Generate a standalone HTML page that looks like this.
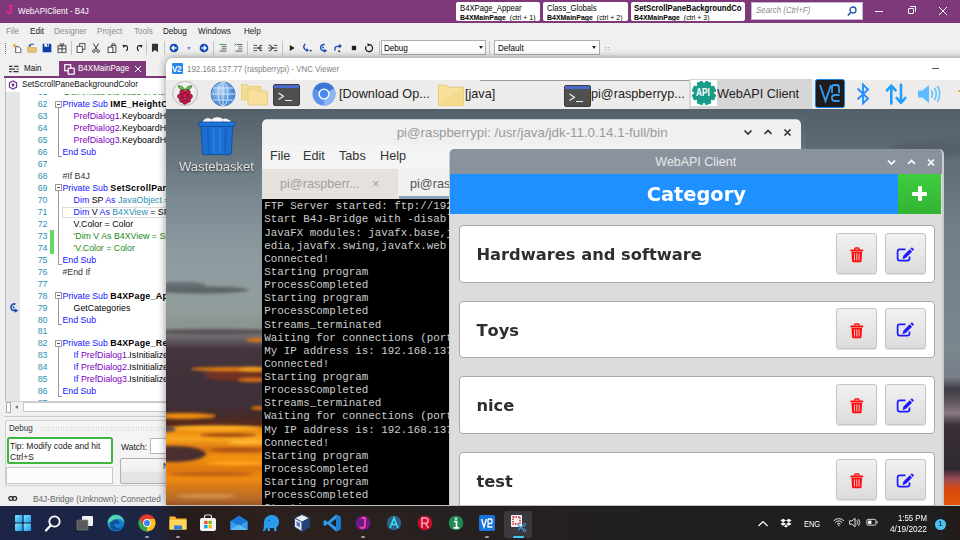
<!DOCTYPE html>
<html><head><meta charset="utf-8"><title>WebAPIClient - B4J</title>
<style>
*{box-sizing:border-box;margin:0;padding:0}
html,body{width:960px;height:540px;overflow:hidden;background:#f0f0f0;font-family:"Liberation Sans",sans-serif;}
.a{position:absolute}
.t{position:absolute;white-space:nowrap;line-height:1}
/* B4J IDE */
#ide{left:0;top:0;width:960px;height:505px;background:#f0f0f0;overflow:hidden}
#tb{left:0;top:0;width:960px;height:22.600px;background:#7e397b}
.qb{background:#fff;border-radius:2px;top:2px;height:19px;overflow:hidden}
.menu{top:27px;font-size:9px;color:#222;transform:scaleX(.9);transform-origin:0 0}
.menu.d{color:#8d8d8d}
.ln{left:25px;width:23px;text-align:right;font-size:8.8px;color:#2b91af;font-family:"Liberation Sans",sans-serif}
.cd{font-size:8.8px;color:#000}
.cd b{letter-spacing:.3px}
.sg{transform:scaleX(.89);transform-origin:0 0}
.k{color:#1414ff}.p{color:#8000c0}.ty{color:#2b91af}.g{color:#1a8a1a}.b{font-weight:bold}
#tools svg{transform:scale(.87)}
/* VNC */
#vnc{left:166px;top:58px;width:800px;height:447px;background:#fff;border-radius:7px 0 0 0;overflow:hidden;box-shadow:0 0 8px rgba(0,0,0,.45)}
#pibar{left:0;top:20px;width:800px;height:31px;background:#eeecea}
#desk{left:0;top:51px;width:800px;height:400px;overflow:hidden;background:#5a6770}
.pit{font-size:13.2px;color:#222;transform:scaleX(.96);transform-origin:0 0}
/* terminal */
#term{left:96px;top:9px;width:539px;height:400px;background:#f0f0f0;border-radius:5px 5px 0 0;overflow:hidden;clip-path:inset(1.3px 0 0 0 round 5px 5px 0 0)}
#tscr{left:0;top:80.700px;width:540px;height:320px;background:#000}
.tl{margin-top:-0.700px;left:2.300px;font-family:"Liberation Mono",monospace;font-size:10.83px;color:#cdcdcd}
.pim{font-size:13.2px;color:#333;transform:scaleX(.96);transform-origin:0 0}
/* webapi */
#wa{left:283px;top:40px;width:495px;height:360px;border-left:1.5px solid #c9cbcd;border-right:2px solid #c9cbcd;background:#dcdcdc;border-radius:5px 5px 0 0;overflow:hidden}
#wat{left:-2px;top:0;width:497px;height:24.5px;background:#8a939d}
#wah{left:0;top:24.5px;width:447.5px;height:40.5px;background:#1e90ff}
#wag{left:447.5px;top:24.5px;width:43.5px;height:40.5px;background:linear-gradient(#40cc40,#32b432)}
.it{left:9px;width:475.5px;height:57.5px;background:#fff;border:1px solid #a9a9a9;border-radius:4px}
.itx{font-kerning:none;left:16.4px;top:21px;font-family:"DejaVu Sans",sans-serif;font-weight:bold;font-size:16.3px;color:#2e2e2e}
.bt{top:6.5px;width:41px;height:41px;border:1px solid #c4c4c4;border-radius:3px;background:linear-gradient(#f1f1f1,#dcdcdc);box-shadow:0 1px 1px rgba(0,0,0,.12)}
/* taskbar */
#wtb{left:0;top:505.600px;width:960px;height:35px;background:linear-gradient(90deg,#1c2546 0,#1d2545 150px,#271c1c 185px,#2b201d 260px,#292120 380px,#252021 520px,#211f20 640px,#1f1f20 760px,#1f1f20 935px,#241b1a 960px)}
</style></head><body>
<div id="ide" class="a">
<div id="tb" class="a">
  <div class="t" style="left:5.5px;top:4px;font-size:12.5px;font-weight:bold;color:#ee1fa0;transform:scaleX(.85);transform-origin:0 0">J</div>
  <div class="t sg" style="left:18px;top:7px;font-size:9px;color:#fff;">WebAPIClient - B4J</div>
  <div class="a qb" style="left:455.700px;width:84.500px"><div class="t" style="left:4.300px;top:2px;font-size:9px;color:#000;transform:scaleX(.855);transform-origin:0 0">B4XPage_Appear</div><div class="t" style="left:4.300px;top:11.5px;font-size:7.4px;color:#000;transform:scaleX(.94);transform-origin:0 0"><b>B4XMainPage</b> &nbsp;(ctrl + 1)</div></div>
  <div class="a qb" style="left:543px;width:85px"><div class="t" style="left:4px;top:2px;font-size:9px;color:#000;transform:scaleX(.855);transform-origin:0 0">Class_Globals</div><div class="t" style="left:4px;top:11.5px;font-size:7.4px;color:#000;transform:scaleX(.94);transform-origin:0 0"><b>B4XMainPage</b> &nbsp;(ctrl + 2)</div></div>
  <div class="a qb" style="left:631px;width:114px"><div class="t" style="left:3px;top:2px;font-size:9px;color:#000;font-weight:bold;transform:scaleX(.86);transform-origin:0 0">SetScrollPaneBackgroundCo</div><div class="t" style="left:3px;top:11.5px;font-size:7.4px;color:#000;transform:scaleX(.94);transform-origin:0 0"><b>B4XMainPage</b> &nbsp;(ctrl + 3)</div></div>
  <div class="a" style="left:751px;top:2px;width:112px;height:18px;background:#fff;border:1px solid #c9b3d2"><div class="t" style="left:4px;top:3px;font-size:9px;font-style:italic;color:#8a8a8a;transform:scaleX(.88);transform-origin:0 0">Search (Ctrl+F)</div>
   <svg class="a" style="left:94px;top:2px" width="12" height="12" viewBox="0 0 12 12"><circle cx="7" cy="5" r="3" fill="none" stroke="#1a4fb0" stroke-width="1.3"/><path d="M4.8 7.2L1.8 10.4" stroke="#1a4fb0" stroke-width="1.5"/></svg></div>
  <div class="a" style="left:875px;top:11px;width:8px;height:1px;background:#fff"></div>
  <div class="a" style="left:908px;top:8px;width:6px;height:6px;border:1px solid #fff;border-radius:1px"></div>
  <div class="a" style="left:910px;top:6px;width:6px;height:6px;border-top:1px solid #fff;border-right:1px solid #fff;border-radius:1px"></div>
  <svg class="a" style="left:938px;top:6px" width="10" height="10" viewBox="0 0 10 10"><path d="M1 1L9 9M9 1L1 9" stroke="#fff" stroke-width="1"/></svg>
 </div>
 <div class="t menu d" style="left:6px">File</div>
 <div class="t menu" style="left:30px">Edit</div>
 <div class="t menu d" style="left:54px">Designer</div>
 <div class="t menu d" style="left:97px">Project</div>
 <div class="t menu d" style="left:134px">Tools</div>
 <div class="t menu" style="left:163px">Debug</div>
 <div class="t menu" style="left:198px">Windows</div>
 <div class="t menu" style="left:244px">Help</div>
 <!-- toolbar -->
 <div id="tools" class="a" style="left:0;top:39px;width:960px;height:19px">
  <div class="a" style="left:5px;top:4px;width:1px;height:11px;border-left:1px dotted #777"></div>
  <div class="a" style="left:71.4px;top:2px;width:1px;height:14px;background:#c4c4c4"></div>
  <div class="a" style="left:145.5px;top:2px;width:1px;height:14px;background:#c4c4c4"></div>
  <div class="a" style="left:164.1px;top:2px;width:1px;height:14px;background:#c4c4c4"></div>
  <div class="a" style="left:213.0px;top:2px;width:1px;height:14px;background:#c4c4c4"></div>
  <div class="a" style="left:247.2px;top:2px;width:1px;height:14px;background:#c4c4c4"></div>
  <div class="a" style="left:281.8px;top:2px;width:1px;height:14px;background:#c4c4c4"></div>
  <div class="a" style="left:378.5px;top:2px;width:1px;height:14px;background:#c4c4c4"></div>
  <div class="a" style="left:489.0px;top:2px;width:1px;height:14px;background:#c4c4c4"></div>
  <svg class="a" style="left:10.5px;top:2.9px" width="12" height="12" viewBox="0 0 12 12"><path d="M4.5 4.5H8L10.5 7V11.5H4.5Z" fill="#fff" stroke="#444" stroke-width="1"/><path d="M3 0.5L3.8 2.4L5.8 3L3.8 3.8L3 5.8L2.2 3.8L0.3 3L2.2 2.4Z" fill="#e8a317"/></svg>
  <svg class="a" style="left:25.7px;top:2.9px" width="12" height="12" viewBox="0 0 12 12"><path d="M1 4.5H5L6 5.5H11V11H1Z" fill="#e8c27a" stroke="#c89a45" stroke-width="0.6"/><path d="M3.5 3.5C4.5 1 7 1 8 2.2" fill="none" stroke="#1a4fb0" stroke-width="1.3"/><path d="M2 2.2L5 2.2L3.6 5Z" fill="#1a4fb0"/></svg>
  <svg class="a" style="left:40.9px;top:2.9px" width="12" height="12" viewBox="0 0 12 12"><path d="M1 1H10L11 2V11H1Z" fill="#0b3fa8"/><rect x="3" y="1" width="5" height="3.5" fill="#fff"/><rect x="6" y="1.5" width="1.3" height="2.3" fill="#0b3fa8"/></svg>
  <svg class="a" style="left:56.0px;top:2.9px" width="12" height="12" viewBox="0 0 12 12"><rect x="1.5" y="3.5" width="9" height="8" fill="none" stroke="#333" stroke-width="1"/><path d="M6 3.5V11.5M1.5 7H10.5" stroke="#333" stroke-width="1"/><path d="M6 3.5C4 3 3 1.2 4.2 0.8C5.2 0.6 6 2 6 3.5C6 2 6.8 0.6 7.8 0.8C9 1.2 8 3 6 3.5" fill="none" stroke="#333" stroke-width="0.9"/></svg>
  <svg class="a" style="left:75.0px;top:2.9px" width="12" height="12" viewBox="0 0 12 12"><rect x="4.5" y="1" width="6" height="6.5" fill="#fff" stroke="#333" stroke-width="1"/><rect x="1.5" y="4" width="6" height="7" fill="#fff" stroke="#333" stroke-width="1"/></svg>
  <svg class="a" style="left:90.0px;top:2.9px" width="12" height="12" viewBox="0 0 12 12"><path d="M3 0.8L7.5 8M9 0.8L4.5 8" stroke="#333" stroke-width="1.1" fill="none"/><circle cx="3.6" cy="9.6" r="1.6" fill="none" stroke="#333" stroke-width="1"/><circle cx="8.4" cy="9.6" r="1.6" fill="none" stroke="#333" stroke-width="1"/></svg>
  <svg class="a" style="left:105.5px;top:2.9px" width="12" height="12" viewBox="0 0 12 12"><rect x="1.5" y="5" width="5.5" height="6.3" fill="#fff" stroke="#333" stroke-width="1"/><path d="M5 5V3H10.5V11.3H7" fill="none" stroke="#333" stroke-width="1"/><rect x="6.2" y="1.2" width="3" height="2" fill="#fff" stroke="#333" stroke-width="0.9"/></svg>
  <svg class="a" style="left:119.6px;top:2.9px" width="12" height="12" viewBox="0 0 12 12"><path d="M3.5 4C7 2 9.5 5 6.5 9.5" fill="none" stroke="#222" stroke-width="1.3"/><path d="M2 2.2L5.6 2.8L3 6Z" fill="#222"/></svg>
  <svg class="a" style="left:132.5px;top:2.9px" width="12" height="12" viewBox="0 0 12 12"><path d="M8.5 4C5 2 2.5 5 5.5 9.5" fill="none" stroke="#222" stroke-width="1.3"/><path d="M10 2.2L6.4 2.8L9 6Z" fill="#222"/></svg>
  <svg class="a" style="left:149.0px;top:2.9px" width="12" height="12" viewBox="0 0 12 12"><path d="M2.5 1H9.5V11L6 8.2L2.5 11Z" fill="#333"/></svg>
  <svg class="a" style="left:168.0px;top:2.9px" width="12" height="12" viewBox="0 0 12 12"><circle cx="6" cy="6" r="5" fill="#0b4bb5"/><path d="M9 6H4M6.2 3.5L3.6 6L6.2 8.5" fill="none" stroke="#fff" stroke-width="1.5"/></svg>
  <div class="a" style="left:186.5px;top:8px;border:2.5px solid transparent;border-top:3px solid #6a8fd0"></div>
  <svg class="a" style="left:197.5px;top:2.9px" width="12" height="12" viewBox="0 0 12 12"><circle cx="6" cy="6" r="5" fill="#0b4bb5"/><path d="M3 6H8M5.8 3.5L8.4 6L5.8 8.5" fill="none" stroke="#fff" stroke-width="1.5"/></svg>
  <svg class="a" style="left:217.0px;top:2.9px" width="12" height="12" viewBox="0 0 12 12"><path d="M2 2H10" stroke="#2a8a2a" stroke-width="1"/><path d="M4.5 4.5H10M4.5 7H10M2 9.5H10" stroke="#444" stroke-width="1"/></svg>
  <svg class="a" style="left:232.5px;top:2.9px" width="12" height="12" viewBox="0 0 12 12"><path d="M4 2H10" stroke="#444" stroke-width="1"/><path d="M5 4.5H10M5 7H10" stroke="#2a8a2a" stroke-width="1"/><path d="M2 9.5H10" stroke="#444" stroke-width="1"/><path d="M1 3L3 1.2M1 1.2L3 3" stroke="#444" stroke-width="0.8"/></svg>
  <svg class="a" style="left:251.7px;top:2.9px" width="12" height="12" viewBox="0 0 12 12"><path d="M1 3H5M8 3H11M1 9H5M8 9H11M0.5 6H11" stroke="#333" stroke-width="1"/><path d="M9 3.8L6.4 6L9 8.2" fill="none" stroke="#333" stroke-width="1.2"/></svg>
  <svg class="a" style="left:266.7px;top:2.9px" width="12" height="12" viewBox="0 0 12 12"><path d="M1 3H4M7 3H11M1 9H4M7 9H11M0.5 6H11" stroke="#333" stroke-width="1"/><path d="M3.4 3.8L6 6L3.4 8.2" fill="none" stroke="#333" stroke-width="1.2"/></svg>
  <svg class="a" style="left:286.0px;top:2.9px" width="12" height="12" viewBox="0 0 12 12"><path d="M3.5 2.5L9 6L3.5 9.5Z" fill="#222"/></svg>
  <svg class="a" style="left:301.0px;top:2.9px" width="12" height="12" viewBox="0 0 12 12"><path d="M4 1.5C0.5 4.5 3 9 7 8.5" fill="none" stroke="#1a4fb0" stroke-width="1.6"/><path d="M5.5 6.2L8.6 8.6L5.2 10.6Z" fill="#1a4fb0"/><circle cx="10.3" cy="9" r="1.1" fill="#222"/></svg>
  <svg class="a" style="left:316.7px;top:2.9px" width="12" height="12" viewBox="0 0 12 12"><path d="M8 2.2A3.6 3.6 0 1 0 8 9" fill="none" stroke="#1a4fb0" stroke-width="1.6"/><path d="M6.8 7L11 9.2L7.2 11.5Z" fill="#1a4fb0"/><circle cx="6" cy="5.5" r="1.1" fill="#1a4fb0"/></svg>
  <svg class="a" style="left:332.0px;top:2.9px" width="12" height="12" viewBox="0 0 12 12"><path d="M2.5 9V6.5C2.5 4.5 4 3.8 8 3.8" fill="none" stroke="#1a4fb0" stroke-width="1.6"/><path d="M7 1L10.8 3.8L7 6.6Z" fill="#1a4fb0"/><circle cx="7.4" cy="9.8" r="1.1" fill="#222"/></svg>
  <svg class="a" style="left:347.5px;top:2.9px" width="12" height="12" viewBox="0 0 12 12"><rect x="3.5" y="3.5" width="5" height="5" fill="#222"/></svg>
  <svg class="a" style="left:362.7px;top:2.9px" width="12" height="12" viewBox="0 0 12 12"><path d="M6 2.2A4 4 0 1 1 2.6 4.2" fill="none" stroke="#222" stroke-width="1.5"/><path d="M4.2 0.2L7.4 2.2L4.4 4.5Z" fill="#222"/></svg>
  <div class="a" style="left:381px;top:1px;width:105px;height:15px;background:#fff;border:1px solid #adadad"><div class="t" style="left:2px;top:3px;font-size:9px;color:#000;transform:scaleX(.9);transform-origin:0 0">Debug</div><div class="a" style="left:97px;top:5px;border:2.5px solid transparent;border-top:3px solid #222"></div></div>
  <div class="a" style="left:494px;top:1px;width:106px;height:15px;background:#fff;border:1px solid #adadad"><div class="t" style="left:3px;top:3px;font-size:9px;color:#000;transform:scaleX(.9);transform-origin:0 0">Default</div><div class="a" style="left:97px;top:5px;border:2.5px solid transparent;border-top:3px solid #222"></div></div>
  <div class="t" style="left:605px;top:6px;font-size:7px;color:#888">&#8759;</div>
 </div>

 <!-- tabs -->
 <div class="a" style="left:0;top:58px;width:960px;height:19px;background:#f0f0f0"></div>
 <svg class="a" style="left:9px;top:64.500px" width="9.500" height="9" viewBox="0 0 11 10"><path d="M0 1.5h4M6 1.5h5M0 4.5h7M9 4.5h2M0 7.5h3M5 7.5h6" stroke="#333" stroke-width="1.4"/></svg>
 <div class="t sg" style="left:24px;top:64px;font-size:9px;color:#111">Main</div>
 <div class="a" style="left:59px;top:61px;width:87px;height:16px;background:#7e397b"></div>
 <svg class="a" style="left:64px;top:64px" width="11" height="11" viewBox="0 0 11 11"><rect x="0.7" y="0.7" width="6" height="6" fill="#7e397b" stroke="#fff" stroke-width="1.2"/><rect x="4.2" y="4.2" width="6" height="6" fill="#7e397b" stroke="#fff" stroke-width="1.2"/></svg>
 <div class="t sg" style="left:78px;top:64px;font-size:9px;color:#fff">B4XMainPage</div>
 <svg class="a" style="left:134px;top:65px" width="8" height="8" viewBox="0 0 8 8"><path d="M1 1L7 7M7 1L1 7" stroke="#fff" stroke-width="1"/></svg>
 <div class="a" style="left:4px;top:76px;width:956px;height:2px;background:#7e397b"></div>
 <!-- sub selector -->
 <div class="a" style="left:5px;top:78px;width:955px;height:14px;background:#fff;border-left:1px solid #bbb"></div>
 <svg class="a" style="left:8px;top:80px" width="10" height="10" viewBox="0 0 10 10"><path d="M5 0.8L8.6 2.9V7.1L5 9.2L1.4 7.1V2.9Z" fill="none" stroke="#6a2c91" stroke-width="1.1"/><circle cx="5" cy="5" r="1.4" fill="#6a2c91"/></svg>
 <div class="t" style="left:22px;top:80px;font-size:9px;color:#111;transform:scaleX(.916);transform-origin:0 0">SetScrollPaneBackgroundColor</div>
 <!-- editor -->
 <div id="ed" class="a" style="isolation:isolate;left:5px;top:92px;width:955px;height:309px;background:#fff;overflow:hidden;border-left:1px solid #bbb">
  <div class="a" style="left:0;top:0;width:14px;height:309px;background:#e6e6e6"></div>
  <div class="a" style="left:14px;top:0;width:941px;height:1.800px;background:#fff;z-index:3"></div>
  <div class="a" style="left:44px;top:138.2px;width:4px;height:24px;background:#63d863"></div>
  <div class="a" style="left:56px;top:114.7px;width:500px;height:11.5px;border:1px solid #dcdcdc"></div>

  <div class="t ln" style="left:18.5px;top:-3.8px">61</div>
  <div class="t cd" style="left:56.4px;top:-3.8px"><span class="g">'Don't miss the code in the</span></div>
  <div class="t ln" style="left:18.5px;top:8.2px">62</div>
  <div class="t cd" style="left:56.4px;top:8.2px"><span class="k">Private Sub</span> <b>IME_HeightChanged</b></div>
  <div class="t ln" style="left:18.5px;top:20.2px">63</div>
  <div class="t cd" style="left:67.6px;top:20.2px"><span class="p">PrefDialog1</span>.KeyboardHeightChanged</div>
  <div class="t ln" style="left:18.5px;top:32.1px">64</div>
  <div class="t cd" style="left:67.6px;top:32.1px"><span class="p">PrefDialog2</span>.KeyboardHeightChanged</div>
  <div class="t ln" style="left:18.5px;top:44.1px">65</div>
  <div class="t cd" style="left:67.6px;top:44.1px"><span class="p">PrefDialog3</span>.KeyboardHeightChanged</div>
  <div class="t ln" style="left:18.5px;top:56.0px">66</div>
  <div class="t cd" style="left:56.4px;top:56.0px"><span class="k">End Sub</span></div>
  <div class="t ln" style="left:18.5px;top:68.0px">67</div>
  <div class="t ln" style="left:18.5px;top:80.0px">68</div>
  <div class="t cd" style="left:56.4px;top:80.0px"><span style="color:#333">#If B4J</span></div>
  <div class="t ln" style="left:18.5px;top:91.9px">69</div>
  <div class="t cd" style="left:56.4px;top:91.9px"><span class="k">Private Sub</span> <b>SetScrollPaneBackgroundColor</b></div>
  <div class="t ln" style="left:18.5px;top:103.9px">70</div>
  <div class="t cd" style="left:67.6px;top:103.9px"><span class="k">Dim</span> SP <span class="k">As</span> <span class="ty">JavaObject</span> = View</div>
  <div class="t ln" style="left:18.5px;top:115.8px">71</div>
  <div class="t cd" style="left:67.6px;top:115.8px"><span class="k">Dim</span> V <span class="k">As</span> <span class="ty">B4XView</span> = SP.RunMethod</div>
  <div class="t ln" style="left:18.5px;top:127.8px">72</div>
  <div class="t cd" style="left:67.6px;top:127.8px">V.Color = Color</div>
  <div class="t ln" style="left:18.5px;top:139.8px">73</div>
  <div class="t cd" style="left:67.6px;top:139.8px"><span class="g">'Dim V As B4XView = SP.RunMethod</span></div>
  <div class="t ln" style="left:18.5px;top:151.7px">74</div>
  <div class="t cd" style="left:67.6px;top:151.7px"><span class="g">'V.Color = Color</span></div>
  <div class="t ln" style="left:18.5px;top:163.7px">75</div>
  <div class="t cd" style="left:56.4px;top:163.7px"><span class="k">End Sub</span></div>
  <div class="t ln" style="left:18.5px;top:175.6px">76</div>
  <div class="t cd" style="left:56.4px;top:175.6px"><span style="color:#333">#End If</span></div>
  <div class="t ln" style="left:18.5px;top:187.6px">77</div>
  <div class="t ln" style="left:18.5px;top:199.6px">78</div>
  <div class="t cd" style="left:56.4px;top:199.6px"><span class="k">Private Sub</span> <b>B4XPage_Appear</b></div>
  <div class="t ln" style="left:18.5px;top:211.5px">79</div>
  <div class="t cd" style="left:67.6px;top:211.5px">GetCategories</div>
  <div class="t ln" style="left:18.5px;top:223.5px">80</div>
  <div class="t cd" style="left:56.4px;top:223.5px"><span class="k">End Sub</span></div>
  <div class="t ln" style="left:18.5px;top:235.4px">81</div>
  <div class="t ln" style="left:18.5px;top:247.4px">82</div>
  <div class="t cd" style="left:56.4px;top:247.4px"><span class="k">Private Sub</span> <b>B4XPage_Resize</b> (Width</div>
  <div class="t ln" style="left:18.5px;top:259.4px">83</div>
  <div class="t cd" style="left:67.6px;top:259.4px"><span class="k">If</span> <span class="p">PrefDialog1</span>.IsInitialized</div>
  <div class="t ln" style="left:18.5px;top:271.3px">84</div>
  <div class="t cd" style="left:67.6px;top:271.3px"><span class="k">If</span> <span class="p">PrefDialog2</span>.IsInitialized</div>
  <div class="t ln" style="left:18.5px;top:283.3px">85</div>
  <div class="t cd" style="left:67.6px;top:283.3px"><span class="k">If</span> <span class="p">PrefDialog3</span>.IsInitialized</div>
  <div class="t ln" style="left:18.5px;top:295.2px">86</div>
  <div class="t cd" style="left:56.4px;top:295.2px"><span class="k">End Sub</span></div>
  <div class="t ln" style="left:18.5px;top:307.2px">87</div>
  <div class="a" style="left:51.5px;top:15.6px;width:1px;height:48.8px;background:#9a9a9a"></div><div class="a" style="left:51.5px;top:64.4px;width:4px;height:1px;background:#9a9a9a"></div><div class="a" style="left:48.5px;top:8.6px;width:7px;height:7px;background:#fff;border:1px solid #9a9a9a"></div><div class="a" style="left:50.5px;top:11.6px;width:3px;height:1px;background:#555"></div>
  <div class="a" style="left:51.5px;top:99.3px;width:1px;height:72.8px;background:#9a9a9a"></div><div class="a" style="left:51.5px;top:172.1px;width:4px;height:1px;background:#9a9a9a"></div><div class="a" style="left:48.5px;top:92.3px;width:7px;height:7px;background:#fff;border:1px solid #9a9a9a"></div><div class="a" style="left:50.5px;top:95.3px;width:3px;height:1px;background:#555"></div>
  <div class="a" style="left:51.5px;top:207.0px;width:1px;height:24.9px;background:#9a9a9a"></div><div class="a" style="left:51.5px;top:231.9px;width:4px;height:1px;background:#9a9a9a"></div><div class="a" style="left:48.5px;top:200.0px;width:7px;height:7px;background:#fff;border:1px solid #9a9a9a"></div><div class="a" style="left:50.5px;top:203.0px;width:3px;height:1px;background:#555"></div>
  <div class="a" style="left:51.5px;top:254.8px;width:1px;height:48.8px;background:#9a9a9a"></div><div class="a" style="left:51.5px;top:303.6px;width:4px;height:1px;background:#9a9a9a"></div><div class="a" style="left:48.5px;top:247.8px;width:7px;height:7px;background:#fff;border:1px solid #9a9a9a"></div><div class="a" style="left:50.5px;top:250.8px;width:3px;height:1px;background:#555"></div>
  <svg class="a" style="left:3px;top:210.4px" width="10" height="11" viewBox="0 0 10 11"><path d="M6.5 2.2A3.3 3.3 0 1 0 6.5 8.3" fill="none" stroke="#1a4fb0" stroke-width="1.6"/><path d="M5.5 6.5L9.5 8.5L5.8 10.8Z" fill="#1a4fb0"/><circle cx="4.6" cy="5.2" r="1" fill="#1a4fb0"/></svg>
 </div>
 <!-- hscroll -->
 <div class="a" style="left:5px;top:401px;width:955px;height:12px;background:#f0f0f0;border-top:1px solid #d0d0d0"></div>
 <div class="a" style="left:6px;top:402px;width:5px;height:11px;background:#fff;border:1px solid #aaa"></div>
 <div class="a" style="left:15px;top:405px;border:2.5px solid transparent;border-right:3.5px solid #777;border-left:0"></div>
 <div class="a" style="left:23px;top:402px;width:937px;height:10px;background:#fff;border:1px solid #c8c8c8"></div>
 <div class="a" style="left:4px;top:416px;width:956px;height:1px;background:#c8c8c8"></div>
 <!-- debug panel -->
 <div class="a" style="left:4.500px;top:419.500px;width:955px;height:66.500px;background:#f4f4f4;border:1px solid #d0d0d0"></div>
 <div class="t sg" style="left:9px;top:424px;font-size:9px;color:#333">Debug</div>
 <div class="a" style="left:40px;top:426px;width:920px;height:5px;background-image:radial-gradient(#b8b8b8 0.6px,transparent 0.8px);background-size:2.5px 2.5px"></div>
 <div class="a" style="left:7px;top:437px;width:106px;height:27px;background:#fff;border:2px solid #3db83d;border-radius:2.500px"></div>
 <div class="t" style="left:10px;top:440.500px;font-size:9.4px;color:#222;transform:scaleX(.91);transform-origin:0 0">Tip: Modify code and hit</div>
 <div class="t" style="left:10px;top:451.700px;font-size:9.4px;color:#222;transform:scaleX(.91);transform-origin:0 0">Ctrl+S</div>
 <div class="a" style="left:6px;top:467px;width:107px;height:17px;background:#fbfbfb;border:1px solid #c8c8c8"></div>
 <div class="t" style="left:121px;top:441.600px;font-size:9.4px;color:#222;transform:scaleX(.91);transform-origin:0 0">Watch:</div>
 <div class="a" style="left:150px;top:438px;width:200px;height:16px;background:#fff;border:1px solid #b8b8b8"></div>
 <div class="a" style="left:120px;top:458px;width:200px;height:26px;background:linear-gradient(#f6f6f6 0,#f0f0f0 52%,#c8c8c8 53%,#e6e6e6 57%,#e2e2e2 100%);border:1px solid #b0b0b0;border-radius:2px"></div>
 <div class="t sg" style="left:163px;top:462px;font-size:9px;color:#222">Next</div>
 <!-- status -->
 <div class="a" style="left:0;top:490px;width:960px;height:15px;background:#f0f0f0"></div>
 <svg class="a" style="left:8px;top:496px" width="9.500" height="5" viewBox="0 0 11 6"><rect x="0.8" y="0.8" width="5" height="4.4" rx="2.2" fill="none" stroke="#222" stroke-width="1.5"/><rect x="5.2" y="0.8" width="5" height="4.4" rx="2.2" fill="none" stroke="#222" stroke-width="1.5"/></svg>
 <div class="t" style="left:32.500px;top:494.800px;font-size:9.2px;color:#666;transform:scaleX(.9);transform-origin:0 0">B4J-Bridge (Unknown): Connected</div>
</div>
<div id="vnc" class="a">
<div class="a" style="left:5.700px;top:4.900px;width:11.200px;height:11.200px;background:#2586ec;border-radius:1px"></div>
 <div class="t" style="left:6.300px;top:6px;font-size:9.500px;font-weight:bold;color:#fff;letter-spacing:-0.600px;transform:scaleX(.86);transform-origin:0 0">V2</div>
 <div class="t" style="left:20.5px;top:7px;font-size:9.2px;color:#848484;transform:scaleX(.862);transform-origin:0 0">192.168.137.77 (raspberrypi) - VNC Viewer</div>
 <div class="a" style="left:766px;top:9.5px;width:7px;height:1px;background:#555"></div>
 <div id="pibar" class="a">
  <div class="a" style="left:0;top:0;width:800px;height:1.700px;background:#fff"></div>
  <div class="a" style="left:314px;top:2px;width:210px;height:1px;background:#9a9a9a"></div>
  <!-- raspberry -->
  <div class="a" style="left:5.600px;top:2.800px;width:26px;height:25px;border-radius:13px;background:radial-gradient(circle at 50% 35%,#ffffff,#dcdcdc);border:1px solid #bdbdbd"></div>
  <svg class="a" style="left:10px;top:6px" width="18" height="21" viewBox="0 0 18 21"><path d="M9 6C7.500 2.800 4.800 1.300 2 1.800C2.600 4.800 5.500 6.600 9 6C12.500 6.600 15.400 4.800 16 1.800C13.200 1.300 10.500 2.800 9 6Z" fill="#6cc04a" stroke="#2f6b1f" stroke-width="0.700"/><g fill="#c51a4a" stroke="#6b0c25" stroke-width="0.700"><circle cx="6.300" cy="8.300" r="2.500"/><circle cx="11.700" cy="8.300" r="2.500"/><circle cx="9" cy="11.500" r="2.700"/><circle cx="4" cy="12.300" r="2.400"/><circle cx="14" cy="12.300" r="2.400"/><circle cx="6" cy="16" r="2.500"/><circle cx="12" cy="16" r="2.500"/><circle cx="9" cy="18" r="2.300"/></g></svg>
  <!-- globe -->
  <svg class="a" style="left:44px;top:3px" width="26" height="26" viewBox="0 0 26 26"><defs><radialGradient id="gg" cx="40%" cy="35%"><stop offset="0" stop-color="#b5d5f6"/><stop offset="1" stop-color="#4f90da"/></radialGradient></defs><circle cx="13" cy="13" r="12" fill="url(#gg)" stroke="#3a6cb5" stroke-width="0.8"/><g fill="none" stroke="#dcebfb" stroke-width="0.9"><ellipse cx="13" cy="13" rx="5" ry="12"/><path d="M13 1V25M1 13H25M2.8 7H23.2M2.8 19H23.2"/></g></svg>
  <!-- folders -->
  <svg class="a" style="left:75px;top:5.500px" width="28" height="22" viewBox="0 0 28 22"><path d="M0.500 0.500H6L8 2.500H19.800V16H0.500Z" fill="#f5dc94" stroke="#e3c56c" stroke-width="0.700"/><path d="M7 5H12.500L14.500 7H26.500V21H7Z" fill="#f7e09c" stroke="#e3c56c" stroke-width="0.700"/></svg>
  <!-- terminal -->
  <svg class="a" style="left:107px;top:6px" width="27" height="22" viewBox="0 0 27 22"><rect x="0.5" y="0.5" width="26" height="21" rx="1.5" fill="#4f4f4f" stroke="#3c3c3c"/><rect x="1" y="1" width="25" height="3" fill="#4a6ad0"/><path d="M5.500 9L10.500 12.200L5.500 15.400" fill="none" stroke="#eee" stroke-width="1.200"/><path d="M12 16.500H19" stroke="#eee" stroke-width="1.200"/></svg>
  <!-- chromium -->
  <svg class="a" style="left:146px;top:4px" width="24" height="24" viewBox="0 0 24 24"><circle cx="12" cy="12" r="11.5" fill="#5b93ec"/><path d="M12 12L2 6.5A11.5 11.5 0 0 1 22 6.5Z" fill="#3b77d8"/><path d="M12 12L22 6.5A11.5 11.5 0 0 1 12 23.5Z" fill="#8db6f3"/><circle cx="12" cy="12" r="5.6" fill="#fff"/><circle cx="12" cy="12" r="4.2" fill="#4a8af4"/></svg>
  <div class="t pit" style="left:172.5px;top:9px">[Download Op...</div>
  <svg class="a" style="left:272px;top:6px" width="26" height="22" viewBox="0 0 26 22"><path d="M0.5 1H8L10 3.2H25.5V21.5H0.5Z" fill="#f6e09a" stroke="#e0c060" stroke-width="0.7"/><path d="M25.5 3.2L0.5 21.5H25.5Z" fill="#f2d787" opacity=".6"/></svg>
  <div class="t pit" style="left:299px;top:9px">[java]</div>
  <svg class="a" style="left:398px;top:7px" width="27" height="22" viewBox="0 0 27 22"><rect x="0.5" y="0.5" width="26" height="21" rx="1.5" fill="#4f4f4f" stroke="#3c3c3c"/><rect x="1" y="1" width="25" height="3" fill="#4a6ad0"/><path d="M5.500 9L10.500 12.200L5.500 15.400" fill="none" stroke="#eee" stroke-width="1.200"/><path d="M12 16.500H19" stroke="#eee" stroke-width="1.200"/></svg>
  <div class="t pit" style="left:425px;top:9px">pi@raspberryp...</div>
  <!-- active task -->
  <div class="a" style="left:523px;top:1px;width:123px;height:30px;background:#d6d6d6"></div>
  <div class="a" style="left:524.500px;top:1.700px;width:26.200px;height:26.600px;background:#fff"></div>
  <svg class="a" style="left:525.200px;top:1.800px" width="26" height="26" viewBox="-13 -13 26 26"><g fill="#1a9c88"><rect x="-3.2" y="-12.200" width="6.400" height="6" rx="1.200" transform="rotate(22.5)"/><rect x="-3.2" y="-12.200" width="6.400" height="6" rx="1.200" transform="rotate(67.5)"/><rect x="-3.2" y="-12.200" width="6.400" height="6" rx="1.200" transform="rotate(112.5)"/><rect x="-3.2" y="-12.200" width="6.400" height="6" rx="1.200" transform="rotate(157.5)"/><rect x="-3.2" y="-12.200" width="6.400" height="6" rx="1.200" transform="rotate(202.5)"/><rect x="-3.2" y="-12.200" width="6.400" height="6" rx="1.200" transform="rotate(247.5)"/><rect x="-3.2" y="-12.200" width="6.400" height="6" rx="1.200" transform="rotate(292.5)"/><rect x="-3.2" y="-12.200" width="6.400" height="6" rx="1.200" transform="rotate(337.5)"/><circle r="10.200"/></g></svg>
  <div class="t" style="left:529.800px;top:9.700px;font-size:10.400px;font-weight:bold;color:#fff;transform:scaleX(.8);transform-origin:0 0">API</div>
  <div class="t pit" style="left:551px;top:9px">WebAPI Client</div>
  <!-- tray -->
  <div class="a" style="left:649.300px;top:1.300px;width:29.500px;height:28.500px;background:#1c1c1c;border:1.5px solid #1a84e8;border-radius:2.500px"></div>
  <svg class="a" style="left:651.500px;top:4px" width="25" height="23" viewBox="0 0 25 23"><path d="M2 3L7.5 19L13 3" fill="none" stroke="#3a9cf0" stroke-width="1.8"/><path d="M14 11V5.5Q14 3 16.5 3H18.5Q21 3 21 5.5V11" fill="none" stroke="#3a9cf0" stroke-width="1.8"/><path d="M21.5 13H17Q14 13 14 15.5V16.5Q14 19 17 19H21.5" fill="none" stroke="#3a9cf0" stroke-width="1.8"/></svg>
  <svg class="a" style="left:689px;top:4px" width="16" height="24" viewBox="0 0 16 24"><path d="M2.5 6.5L13 16.5L8 21.5V2.5L13 7.5L2.5 17.5" fill="none" stroke="#2590ff" stroke-width="1.900"/></svg>
  <svg class="a" style="left:718px;top:4px" width="26" height="24" viewBox="0 0 26 24"><path d="M7.300 21.500V3.800M3 8.300L7.300 3.500L11.600 8.300" fill="none" stroke="#1e9eff" stroke-width="2.600" stroke-linecap="round" stroke-linejoin="round"/><path d="M17 2.800V20.500M12.700 16L17 20.800L21.300 16" fill="none" stroke="#1e9eff" stroke-width="2.600" stroke-linecap="round" stroke-linejoin="round"/></svg>
  <svg class="a" style="left:751px;top:5px" width="26" height="22" viewBox="0 0 26 22"><path d="M1 7.500H5.500L12 2V20L5.500 14.500H1Z" fill="#5bbcff"/><path d="M14.500 7.500Q16.500 11 14.500 14.500M17.500 5Q21 11 17.500 17M20.500 3Q25 11 20.500 19" fill="none" stroke="#6cc4ff" stroke-width="1.700"/></svg>
  <div class="a" style="left:792px;top:11.500px;width:3px;height:2px;background:#e9a11a;border-radius:2px 0 0 0"></div>
 </div>
 <div id="desk" class="a">
  <svg class="a" style="left:0;top:0" width="800" height="400" viewBox="0 0 800 400">
   <defs>
    <linearGradient id="sky" x1="0" y1="0" x2="0" y2="1">
     <stop offset="0" stop-color="#53606a"/><stop offset=".1" stop-color="#64727c"/><stop offset=".23" stop-color="#7a8992"/><stop offset=".36" stop-color="#8d9aa0"/><stop offset=".5" stop-color="#929d9c"/><stop offset=".55" stop-color="#8b9291"/><stop offset=".572" stop-color="#6a656a"/><stop offset=".6" stop-color="#44353e"/><stop offset=".66" stop-color="#41313b"/><stop offset=".74" stop-color="#3f2f38"/><stop offset=".765" stop-color="#432a2a"/><stop offset=".79" stop-color="#5a2a1a"/><stop offset=".802" stop-color="#ea880e"/><stop offset=".825" stop-color="#f8a41c"/><stop offset=".85" stop-color="#d87412"/><stop offset=".87" stop-color="#f2920f"/><stop offset=".9" stop-color="#e07810"/><stop offset=".925" stop-color="#ee8a12"/><stop offset=".95" stop-color="#d0771c"/><stop offset=".975" stop-color="#b86c2a"/><stop offset=".99" stop-color="#9a5524"/><stop offset="1" stop-color="#6a3818"/>
    </linearGradient>
    <linearGradient id="skyr" x1="0" y1="0" x2="0" y2="1">
     <stop offset="0" stop-color="#53606a"/><stop offset=".3" stop-color="#707e88"/><stop offset=".6" stop-color="#7b878e"/><stop offset=".67" stop-color="#777f88"/><stop offset=".7" stop-color="#3f3b44"/><stop offset=".73" stop-color="#5a525a"/><stop offset=".76" stop-color="#8a7a82"/><stop offset=".79" stop-color="#3a3038"/><stop offset=".9" stop-color="#2f2832"/><stop offset=".925" stop-color="#9a4c58"/><stop offset=".95" stop-color="#d8480e"/><stop offset="1" stop-color="#e85a0c"/>
    </linearGradient>
    <filter id="bl" x="-20%" y="-50%" width="140%" height="200%"><feGaussianBlur stdDeviation="1.5"/></filter>
   </defs>
   <rect x="0" y="0" width="640" height="400" fill="url(#sky)"/>
   <rect x="640" y="0" width="160" height="400" fill="url(#skyr)"/>
   <g filter="url(#bl)">
    <ellipse cx="35" cy="181" rx="48" ry="3.500" fill="#5d6368"/>
    <ellipse cx="15" cy="176" rx="25" ry="3" fill="#666d72"/>
    <ellipse cx="50" cy="223" rx="70" ry="3" fill="#5a5359"/>
    <ellipse cx="92" cy="231" rx="12" ry="1.800" fill="#ee7c0e"/>
    <ellipse cx="72" cy="266" rx="34" ry="6" fill="#7a3422" opacity=".85"/>
    <ellipse cx="62" cy="260" rx="38" ry="2" fill="#e8800c"/>
    <ellipse cx="86" cy="260" rx="14" ry="2.300" fill="#ffa21c"/>
    <ellipse cx="86" cy="271" rx="14" ry="1.800" fill="#e8780e"/>
    <ellipse cx="93" cy="299" rx="8" ry="1.800" fill="#e8780e"/>
    <ellipse cx="18" cy="307" rx="32" ry="3" fill="#f28c10"/>
    <ellipse cx="50" cy="319" rx="46" ry="2.500" fill="#ffb428"/>
    <ellipse cx="62" cy="326" rx="28" ry="1.800" fill="#9a4414"/>
    <ellipse cx="82" cy="333" rx="20" ry="2.300" fill="#ffb830"/>
    <ellipse cx="72" cy="341" rx="28" ry="2" fill="#a84e14"/>
    <ellipse cx="6" cy="345" rx="34" ry="8" fill="#4a2e30"/>
    <ellipse cx="0" cy="320" rx="10" ry="3" fill="#5a4a50"/>
    <ellipse cx="70" cy="354" rx="30" ry="2.500" fill="#ffa21c"/>
    <ellipse cx="45" cy="365" rx="42" ry="1.800" fill="#b85a16"/>
    <ellipse cx="40" cy="387" rx="30" ry="2" fill="#d8a868" opacity=".7"/>
    <ellipse cx="765" cy="40" rx="42" ry="8" fill="#55606a"/>
    <ellipse cx="790" cy="30" rx="20" ry="4" fill="#59646e"/>
   </g>
  </svg>
    <svg class="a" style="left:31px;top:7px" width="40" height="40" viewBox="0 0 40 40"><path d="M5.500 6.500Q6 3.500 9 2.500Q12 1 14.500 3.500Q17 1 20.500 1.200Q24 1 25.500 3Q29 1.800 31 3.500Q34 4 34 6.500Z" fill="#f7f7f7"/><path d="M14.500 3.500L16 6.500M25.500 3L27.500 6.500" stroke="#c9d3dc" stroke-width="0.800"/><path d="M4 10H35.700L34.400 37Q34.300 38.700 32.600 38.700H7.100Q5.400 38.700 5.300 37Z" fill="#1c6fd2" stroke="#0d4a94" stroke-width="0.800"/><path d="M11 12L11.700 37M28.700 12L28 37" stroke="#165fba" stroke-width="1.600"/><path d="M16.500 12L16.800 37M23 12L22.800 37" stroke="#2a80e2" stroke-width="1.600"/><rect x="1.700" y="6" width="36.300" height="4.300" rx="1.300" fill="#1d76dc" stroke="#0d4a94" stroke-width="0.800"/></svg>
  <div class="t" style="left:13px;top:51px;font-size:13.2px;color:#e0e0e0;text-shadow:0 1px 2px rgba(0,0,0,.6);transform:scaleX(.99);transform-origin:0 0">Wastebasket</div>
  <div id="term" class="a">
   <div class="t" style="left:0;width:540px;text-align:center;top:8px;font-size:13.2px;color:#9a9a9a" id="ttl"><span style="display:inline-block;transform:scaleX(1.01)">pi@raspberrypi: /usr/java/jdk-11.0.14.1-full/bin</span></div>
   <svg class="a" style="left:481px;top:10px" width="50" height="9" viewBox="0 0 50 9"><path d="M1.5 2.5L5 6L8.500 2.5M21.500 6L25 2.500L28.500 6M41.500 1.500L47.500 7.500M47.500 1.500L41.500 7.500" fill="none" stroke="#333" stroke-width="1.7"/></svg>
   <div class="a" style="left:0;top:27px;width:540px;height:25px;background:#f4f4f4"></div>
   <div class="t pim" style="left:8px;top:31.200px">File</div><div class="t pim" style="left:41px;top:31.200px">Edit</div><div class="t pim" style="left:77px;top:31.200px">Tabs</div><div class="t pim" style="left:118px;top:31.200px">Help</div>
   <div class="a" style="left:0;top:50.700px;width:540px;height:30px;background:#e5e2de"></div>
   <div class="a" style="left:136px;top:50.700px;width:404px;height:30px;background:#f1f1f1"></div>
   <div class="a" style="left:136.500px;top:77.500px;width:404px;height:3.200px;background:#8da0b8"></div>
   <div class="t pim" style="left:18px;top:58.900px;color:#a0a0a0">pi@raspberr...</div><div class="t pim" style="left:110px;top:58.900px;color:#a0a0a0">&#215;</div>
   <div class="t pim" style="left:148px;top:58.900px;color:#555">pi@raspberr...</div>
   <div id="tscr" class="a">
    <div class="t tl" style="top:3.2px">FTP Server started: ftp://192.168.137.77</div>
    <div class="t tl" style="top:16.3px">Start B4J-Bridge with -disableassertions</div>
    <div class="t tl" style="top:29.5px">JavaFX modules: javafx.base,javafx.controls</div>
    <div class="t tl" style="top:42.6px">edia,javafx.swing,javafx.web</div>
    <div class="t tl" style="top:55.8px">Connected!</div>
    <div class="t tl" style="top:68.9px">Starting program</div>
    <div class="t tl" style="top:82.0px">ProcessCompleted</div>
    <div class="t tl" style="top:95.2px">Starting program</div>
    <div class="t tl" style="top:108.3px">ProcessCompleted</div>
    <div class="t tl" style="top:121.5px">Streams_terminated</div>
    <div class="t tl" style="top:134.6px">Waiting for connections (port</div>
    <div class="t tl" style="top:147.7px">My IP address is: 192.168.137</div>
    <div class="t tl" style="top:160.9px">Connected!</div>
    <div class="t tl" style="top:174.0px">Starting program</div>
    <div class="t tl" style="top:187.2px">ProcessCompleted</div>
    <div class="t tl" style="top:200.3px">Streams_terminated</div>
    <div class="t tl" style="top:213.4px">Waiting for connections (port</div>
    <div class="t tl" style="top:226.6px">My IP address is: 192.168.137</div>
    <div class="t tl" style="top:239.7px">Connected!</div>
    <div class="t tl" style="top:252.9px">Starting program</div>
    <div class="t tl" style="top:266.0px">ProcessCompleted</div>
    <div class="t tl" style="top:279.1px">Starting program</div>
    <div class="t tl" style="top:292.3px">ProcessCompleted</div>
    <div class="t tl" style="top:305.4px">Starting program</div>
   </div>
  </div>
  <div id="wa" class="a"><div id="wat" class="a"></div>
   <div class="t" style="left:-1px;width:493px;text-align:center;top:6px;font-size:13.2px;color:#e6e8ea"><span style="display:inline-block;transform:scaleX(.945)">WebAPI Client</span></div>
   <svg class="a" style="left:436px;top:9px" width="52" height="9" viewBox="0 0 52 9"><path d="M2 2.500L5.500 6L9 2.500M22 6L25.500 2.500L29 6M42 1.500L48 7.500M48 1.500L42 7.500" fill="none" stroke="#fff" stroke-width="1.7"/></svg>
   <div id="wah" class="a"><div class="t" style="left:0.800px;width:491px;text-align:center;top:11.5px;font-family:'DejaVu Sans',sans-serif;font-weight:bold;font-size:19.4px;color:#fff">Category</div></div>
   <div id="wag" class="a"><div class="a" style="left:14.4px;top:18px;width:15.6px;height:4.2px;background:#fff;border-radius:1px"></div><div class="a" style="left:20.100px;top:12.500px;width:4.2px;height:15.2px;background:#fff;border-radius:1px"></div></div>
   <div class="a it" style="top:76.3px"><div class="t itx">Hardwares and software</div>
    <div class="a bt" style="left:376.2px"><svg class="a" style="left:12.6px;top:13.4px" width="14" height="16" viewBox="0 0 14 16"><path d="M4.700 2.700V1.900Q4.700 1 5.600 1H8.200Q9.100 1 9.100 1.900V2.700" fill="none" stroke="#ff0a0a" stroke-width="1.300"/><rect x="0.400" y="2.500" width="12.800" height="1.900" rx="0.600" fill="#ff0a0a"/><path d="M1.500 4.900H12.100L11.500 14Q11.400 15.200 10.200 15.200H3.400Q2.200 15.200 2.100 14Z" fill="#ff0a0a"/><path d="M4.500 6.300V13.600M6.800 6.300V13.600M9.100 6.300V13.600" stroke="#f6dada" stroke-width="0.9"/></svg></div>
    <div class="a bt" style="left:425.300px"><svg class="a" style="left:10.200px;top:13.100px" width="19" height="16" viewBox="0 0 19 16"><path d="M9.500 2.300H3.800Q1.600 2.300 1.600 4.500V11.400Q1.600 13.600 3.800 13.600H11.300Q13.500 13.600 13.500 11.400V9.500" fill="none" stroke="#1a1aff" stroke-width="1.700"/><path d="M7.300 8.700L13.700 2.300L16.100 4.700L9.700 11.100L6.500 11.900Z" fill="#1a1aff"/><path d="M14.400 1.600L15.300 0.700Q15.900 0.200 16.500 0.800L17.600 1.900Q18.100 2.500 17.600 3.100L16.800 4Z" fill="#1a1aff"/></svg></div>
   </div>
   <div class="a it" style="top:151.7px"><div class="t itx">Toys</div>
    <div class="a bt" style="left:376.2px"><svg class="a" style="left:12.6px;top:13.4px" width="14" height="16" viewBox="0 0 14 16"><path d="M4.700 2.700V1.900Q4.700 1 5.600 1H8.200Q9.100 1 9.100 1.900V2.700" fill="none" stroke="#ff0a0a" stroke-width="1.300"/><rect x="0.400" y="2.500" width="12.800" height="1.900" rx="0.600" fill="#ff0a0a"/><path d="M1.500 4.900H12.100L11.500 14Q11.400 15.200 10.200 15.200H3.400Q2.200 15.200 2.100 14Z" fill="#ff0a0a"/><path d="M4.500 6.300V13.600M6.800 6.300V13.600M9.100 6.300V13.600" stroke="#f6dada" stroke-width="0.9"/></svg></div>
    <div class="a bt" style="left:425.300px"><svg class="a" style="left:10.200px;top:13.100px" width="19" height="16" viewBox="0 0 19 16"><path d="M9.500 2.300H3.800Q1.600 2.300 1.600 4.500V11.400Q1.600 13.600 3.800 13.600H11.300Q13.500 13.600 13.500 11.400V9.500" fill="none" stroke="#1a1aff" stroke-width="1.700"/><path d="M7.300 8.700L13.700 2.300L16.100 4.700L9.700 11.100L6.500 11.900Z" fill="#1a1aff"/><path d="M14.400 1.600L15.300 0.700Q15.900 0.200 16.500 0.800L17.600 1.900Q18.100 2.500 17.600 3.100L16.800 4Z" fill="#1a1aff"/></svg></div>
   </div>
   <div class="a it" style="top:227.1px"><div class="t itx">nice</div>
    <div class="a bt" style="left:376.2px"><svg class="a" style="left:12.6px;top:13.4px" width="14" height="16" viewBox="0 0 14 16"><path d="M4.700 2.700V1.900Q4.700 1 5.600 1H8.200Q9.100 1 9.100 1.900V2.700" fill="none" stroke="#ff0a0a" stroke-width="1.300"/><rect x="0.400" y="2.500" width="12.800" height="1.900" rx="0.600" fill="#ff0a0a"/><path d="M1.500 4.900H12.100L11.500 14Q11.400 15.200 10.200 15.200H3.400Q2.200 15.200 2.100 14Z" fill="#ff0a0a"/><path d="M4.500 6.300V13.600M6.800 6.300V13.600M9.100 6.300V13.600" stroke="#f6dada" stroke-width="0.9"/></svg></div>
    <div class="a bt" style="left:425.300px"><svg class="a" style="left:10.200px;top:13.100px" width="19" height="16" viewBox="0 0 19 16"><path d="M9.500 2.300H3.800Q1.600 2.300 1.600 4.500V11.400Q1.600 13.600 3.800 13.600H11.300Q13.500 13.600 13.500 11.400V9.500" fill="none" stroke="#1a1aff" stroke-width="1.700"/><path d="M7.300 8.700L13.700 2.300L16.100 4.700L9.700 11.100L6.500 11.900Z" fill="#1a1aff"/><path d="M14.400 1.600L15.300 0.700Q15.900 0.200 16.500 0.800L17.600 1.900Q18.100 2.500 17.600 3.100L16.800 4Z" fill="#1a1aff"/></svg></div>
   </div>
   <div class="a it" style="top:302.5px"><div class="t itx">test</div>
    <div class="a bt" style="left:376.2px"><svg class="a" style="left:12.6px;top:13.4px" width="14" height="16" viewBox="0 0 14 16"><path d="M4.700 2.700V1.900Q4.700 1 5.600 1H8.200Q9.100 1 9.100 1.900V2.700" fill="none" stroke="#ff0a0a" stroke-width="1.300"/><rect x="0.400" y="2.500" width="12.800" height="1.900" rx="0.600" fill="#ff0a0a"/><path d="M1.500 4.900H12.100L11.500 14Q11.400 15.200 10.200 15.200H3.400Q2.200 15.200 2.100 14Z" fill="#ff0a0a"/><path d="M4.500 6.300V13.600M6.800 6.300V13.600M9.100 6.300V13.600" stroke="#f6dada" stroke-width="0.9"/></svg></div>
    <div class="a bt" style="left:425.300px"><svg class="a" style="left:10.200px;top:13.100px" width="19" height="16" viewBox="0 0 19 16"><path d="M9.500 2.300H3.800Q1.600 2.300 1.600 4.500V11.400Q1.600 13.600 3.800 13.600H11.300Q13.500 13.600 13.500 11.400V9.500" fill="none" stroke="#1a1aff" stroke-width="1.700"/><path d="M7.300 8.700L13.700 2.300L16.100 4.700L9.700 11.100L6.500 11.900Z" fill="#1a1aff"/><path d="M14.400 1.600L15.300 0.700Q15.900 0.200 16.500 0.800L17.600 1.900Q18.100 2.500 17.600 3.100L16.800 4Z" fill="#1a1aff"/></svg></div>
   </div>
  </div>
 </div>
</div>
<div id="wtb" class="a">
 <svg class="a" style="left:12.7px;top:7.5px" width="20" height="20" viewBox="0 0 20 20"><defs><linearGradient id="wg" x1="0" y1="0" x2="1" y2="1"><stop offset="0" stop-color="#7fe0ff"/><stop offset="1" stop-color="#1a9be8"/></linearGradient></defs><rect x="2" y="2" width="7.400" height="7.400" rx="0.8" fill="url(#wg)"/><rect x="10.600" y="2" width="7.400" height="7.400" rx="0.8" fill="url(#wg)"/><rect x="2" y="10.600" width="7.400" height="7.400" rx="0.8" fill="url(#wg)"/><rect x="10.600" y="10.600" width="7.400" height="7.400" rx="0.8" fill="url(#wg)"/></svg>
 <svg class="a" style="left:43.3px;top:7.5px" width="20" height="20" viewBox="0 0 20 20"><circle cx="11.500" cy="8.500" r="5.200" fill="none" stroke="#fff" stroke-width="1.800"/><path d="M7.800 12.200L3 17.500" stroke="#fff" stroke-width="2.200" stroke-linecap="round"/></svg>
 <svg class="a" style="left:75.0px;top:7.5px" width="20" height="20" viewBox="0 0 20 20"><rect x="7" y="3" width="11" height="10" rx="1" fill="#f2f2f2"/><rect x="2" y="7" width="11" height="10" rx="1" fill="#5a5a5a" stroke="#8a8a8a" stroke-width="0.600"/></svg>
 <svg class="a" style="left:105.7px;top:7.5px" width="20" height="20" viewBox="0 0 20 20"><defs><linearGradient id="eg" x1="0" y1="0" x2="1" y2="1"><stop offset="0" stop-color="#3ed0a0"/><stop offset="0.500" stop-color="#1a8fd8"/><stop offset="1" stop-color="#0c55b0"/></linearGradient></defs><circle cx="10" cy="10" r="8.500" fill="url(#eg)"/><path d="M4 13C3 8 7 5.500 10.500 6.500C13 7.200 14 9.500 13 11H8.500C8.500 14 11 16 14.500 15C11 19 5 17.500 4 13Z" fill="#0b3f88" opacity=".75"/><path d="M2 9C3 4 8 1.500 12.500 2.500C16 3.500 18.500 6.500 18 10C17 6.500 13 5 10 6C6 7 5 10 2 9Z" fill="#5fe0b0" opacity=".8"/></svg>
 <svg class="a" style="left:136.7px;top:7.5px" width="20" height="20" viewBox="0 0 20 20"><circle cx="10" cy="10" r="8.500" fill="#e33b2e"/><path d="M10 10L2.640 14.250A8.500 8.500 0 0 0 10 18.500L14.250 11.500Z" fill="#2da94f"/><path d="M10 10L10 18.500A8.500 8.500 0 0 0 17.360 5.750L10 5.750Z" fill="#fcc31e"/><path d="M2.640 5.750A8.500 8.500 0 0 1 17.360 5.750H10Z" fill="#e33b2e"/><path d="M2.640 5.750L6.300 12.100L2.640 14.250A8.500 8.500 0 0 1 2.640 5.750Z" fill="#2da94f"/><circle cx="10" cy="10" r="3.900" fill="#fff"/><circle cx="10" cy="10" r="3.100" fill="#4285f4"/></svg>
 <svg class="a" style="left:167.7px;top:7.5px" width="20" height="20" viewBox="0 0 20 20"><path d="M1.500 3.500H7L8.500 5.500H18.500V16.500H1.500Z" fill="#f7b928"/><path d="M1.500 7H18.500V16.500H1.500Z" fill="#ffd75e"/><rect x="6" y="12.500" width="8" height="4" fill="#2b7fd8"/></svg>
 <svg class="a" style="left:198.3px;top:7.5px" width="20" height="20" viewBox="0 0 20 20"><path d="M6.500 5V3.500Q6.500 2 8 2H12Q13.500 2 13.500 3.500V5" fill="none" stroke="#e8e8e8" stroke-width="1.200"/><rect x="2" y="5" width="16" height="13" rx="2" fill="#f4f4f4"/><rect x="6.200" y="7.800" width="3.300" height="3.300" fill="#f25022"/><rect x="10.500" y="7.800" width="3.300" height="3.300" fill="#7fba00"/><rect x="6.200" y="12" width="3.300" height="3.300" fill="#00a4ef"/><rect x="10.500" y="12" width="3.300" height="3.300" fill="#ffb900"/></svg>
 <svg class="a" style="left:229.3px;top:7.5px" width="20" height="20" viewBox="0 0 20 20"><path d="M1.500 8L10 2.500L18.500 8V17H1.500Z" fill="#1a78d4"/><path d="M1.500 8L10 13L18.500 8V17H1.500Z" fill="#3aa0ee"/><path d="M1.500 17L10 11.500L18.500 17Z" fill="#62bdf7"/></svg>
 <svg class="a" style="left:260.7px;top:7.5px" width="20" height="20" viewBox="0 0 20 20"><path d="M3 10C3 4.500 7 2 11 2C15.500 2 18 5 18 9C18 12 16.500 13.500 15.500 14V18H13V15H9V18H6.500V14.500C5 15.500 4.500 17 3.500 18H2C2.800 15.500 3 13 3 10Z" fill="#2a9bea"/><circle cx="8" cy="7.500" r="0.800" fill="#0b4f88"/></svg>
 <svg class="a" style="left:291.7px;top:7.5px" width="20" height="20" viewBox="0 0 20 20"><path d="M10 1.500L17.500 5V14L10 18.500L2.500 14V5Z" fill="#e9eef5" stroke="#2a3f6a" stroke-width="1"/><path d="M10 9L17.500 5M10 9L2.500 5M10 9V18.500" stroke="#2a3f6a" stroke-width="1" fill="none"/><path d="M10 9L17.500 5V14L10 18.500Z" fill="#24407a"/><path d="M4.500 8L8 10V14.500L4.500 12.500Z" fill="#5a78b0"/></svg>
 <svg class="a" style="left:322.3px;top:7.5px" width="20" height="20" viewBox="0 0 20 20"><path d="M14 1.500L18.500 3.700V16.300L14 18.500L5.500 11L3 13L1.500 12V8L3 7L5.500 9Z" fill="#2b9df0"/><path d="M14 5.800L8.500 10L14 14.200Z" fill="#1f2022"/><path d="M14 1.500L18.500 3.700V16.300L14 18.500Z" fill="#1a7fd4"/></svg>
 <svg class="a" style="left:353.3px;top:7.5px" width="20" height="20" viewBox="0 0 20 20"><circle cx="10" cy="10" r="7.300" fill="#6a1b8a"/><path d="M8.500 5H12V12Q12 15 9 15Q7.500 15 6.800 14" fill="none" stroke="#ff3ea5" stroke-width="1.800"/></svg>
 <svg class="a" style="left:384.3px;top:7.5px" width="20" height="20" viewBox="0 0 20 20"><circle cx="10" cy="10" r="7.300" fill="#2f5f86"/><path d="M6 15L10 5L14 15M7.500 11.500H12.500" fill="none" stroke="#35e0f0" stroke-width="1.600"/></svg>
 <svg class="a" style="left:415.0px;top:7.5px" width="20" height="20" viewBox="0 0 20 20"><circle cx="10" cy="10" r="7.300" fill="#c8102e"/><path d="M7 15V5H10.500Q13 5 13 7.700Q13 10.300 10.500 10.300H7M10.300 10.300L13.500 15" fill="none" stroke="#ff9ab0" stroke-width="1.600"/></svg>
 <svg class="a" style="left:445.7px;top:7.5px" width="20" height="20" viewBox="0 0 20 20"><circle cx="10" cy="10" r="7.300" fill="#1f8a52"/><path d="M8 8.500H10.500V14.500M7.500 14.800H13" fill="none" stroke="#fff" stroke-width="1.700"/><circle cx="10" cy="5.600" r="1.200" fill="#fff"/></svg>
 <svg class="a" style="left:476.7px;top:7.5px" width="20" height="20" viewBox="0 0 20 20"><rect x="2" y="2" width="16" height="16" rx="1.500" fill="#1a73d9"/><path d="M4.500 6L7 14L9.500 6" fill="none" stroke="#fff" stroke-width="1.400"/><path d="M11 10V7Q11 6 12 6H14Q15 6 15 7V9.500Q15 10.500 14 10.500H12Q11 10.500 11 11.500V14H15.500" fill="none" stroke="#fff" stroke-width="1.300"/></svg>
 <div class="a" style="left:504px;top:5px;width:28px;height:27px;background:#3a3a3e;border-radius:3px"></div>
 <svg class="a" style="left:507.7px;top:7.5px" width="20" height="20" viewBox="0 0 20 20"><rect x="3" y="2" width="11" height="12" rx="1" fill="#f4f4f4"/><rect x="5" y="4" width="7" height="7" fill="none" stroke="#d0202a" stroke-width="1.400" stroke-dasharray="1.500 1"/><path d="M10 12L16 17M16 12L10 17" stroke="#3aa0ee" stroke-width="1.200"/><circle cx="16.500" cy="11.500" r="1.300" fill="none" stroke="#3aa0ee" stroke-width="1"/><circle cx="16.500" cy="17.500" r="1.300" fill="none" stroke="#3aa0ee" stroke-width="1"/></svg>
 <div class="a" style="left:144.7px;top:30px;width:4px;height:2px;background:#9a9a9a;border-radius:1px"></div>
 <div class="a" style="left:175.7px;top:30px;width:4px;height:2px;background:#9a9a9a;border-radius:1px"></div>
 <div class="a" style="left:361.3px;top:30px;width:4px;height:2px;background:#9a9a9a;border-radius:1px"></div>
 <div class="a" style="left:484.7px;top:30px;width:4px;height:2px;background:#9a9a9a;border-radius:1px"></div>
 <div class="a" style="left:512.5px;top:30px;width:11px;height:2px;background:#4cc2f1;border-radius:1px"></div>
 <svg class="a" style="left:753.0px;top:8.6px" width="20" height="20" viewBox="0 0 20 20"><path d="M5.500 12L10 7.500L14.500 12" fill="none" stroke="#fff" stroke-width="1.200"/></svg>
 <svg class="a" style="left:778.8px;top:10.7px" width="14" height="14" viewBox="0 0 20 20"><path d="M6 4L10 6.500L6 9L2 6.500ZM14 4L18 6.500L14 9L10 6.500ZM6 9L10 11.500L6 14L2 11.500ZM14 9L18 11.500L14 14L10 11.500ZM10 12.500L13 14.500L10 16.500L7 14.500Z" fill="#fff"/></svg>
 <div class="t" style="left:804px;top:14.300px;font-size:8.300px;color:#fff;transform:scaleX(.9);transform-origin:0 0">ENG</div>
 <svg class="a" style="left:832.2px;top:9.9px" width="13.6" height="13.6" viewBox="0 0 20 20"><path d="M2.500 8.500Q10 2 17.500 8.500M5 11Q10 6.500 15 11M7.500 13.300Q10 11 12.500 13.300" fill="none" stroke="#fff" stroke-width="1.300"/><circle cx="10" cy="15" r="1" fill="#fff"/></svg>
 <svg class="a" style="left:847.2px;top:8.7px" width="17" height="17" viewBox="0 0 20 20"><path d="M3 8H6L9.500 5V15L6 12H3Z" fill="none" stroke="#fff" stroke-width="1"/><path d="M11.500 7.500Q13.500 10 11.500 12.500M13.500 6Q16.500 10 13.500 14" fill="none" stroke="#fff" stroke-width="1"/></svg>
 <svg class="a" style="left:864.4px;top:8.9px" width="16.5" height="16.5" viewBox="0 0 20 20"><rect x="3.500" y="6.500" width="11" height="7" rx="1.500" fill="none" stroke="#fff" stroke-width="1"/><rect x="5" y="8" width="4" height="4" fill="#fff"/><path d="M15.800 8.800V11.200" stroke="#fff" stroke-width="1.200"/></svg>
 <div class="t" style="left:827px;width:100px;text-align:right;top:8.500px;font-size:8.500px;color:#fff;transform:scaleX(.92);transform-origin:100% 0">1:55 PM</div>
 <div class="t" style="left:827px;width:100px;text-align:right;top:19.400px;font-size:8.500px;color:#fff;transform:scaleX(.98);transform-origin:100% 0">4/19/2022</div>
 <div class="a" style="left:935px;top:13px;width:11px;height:11px;border-radius:6px;background:#4cc2f1"></div><div class="t" style="left:938.300px;top:14.500px;font-size:8px;color:#111">1</div>
</div>
</body></html>
